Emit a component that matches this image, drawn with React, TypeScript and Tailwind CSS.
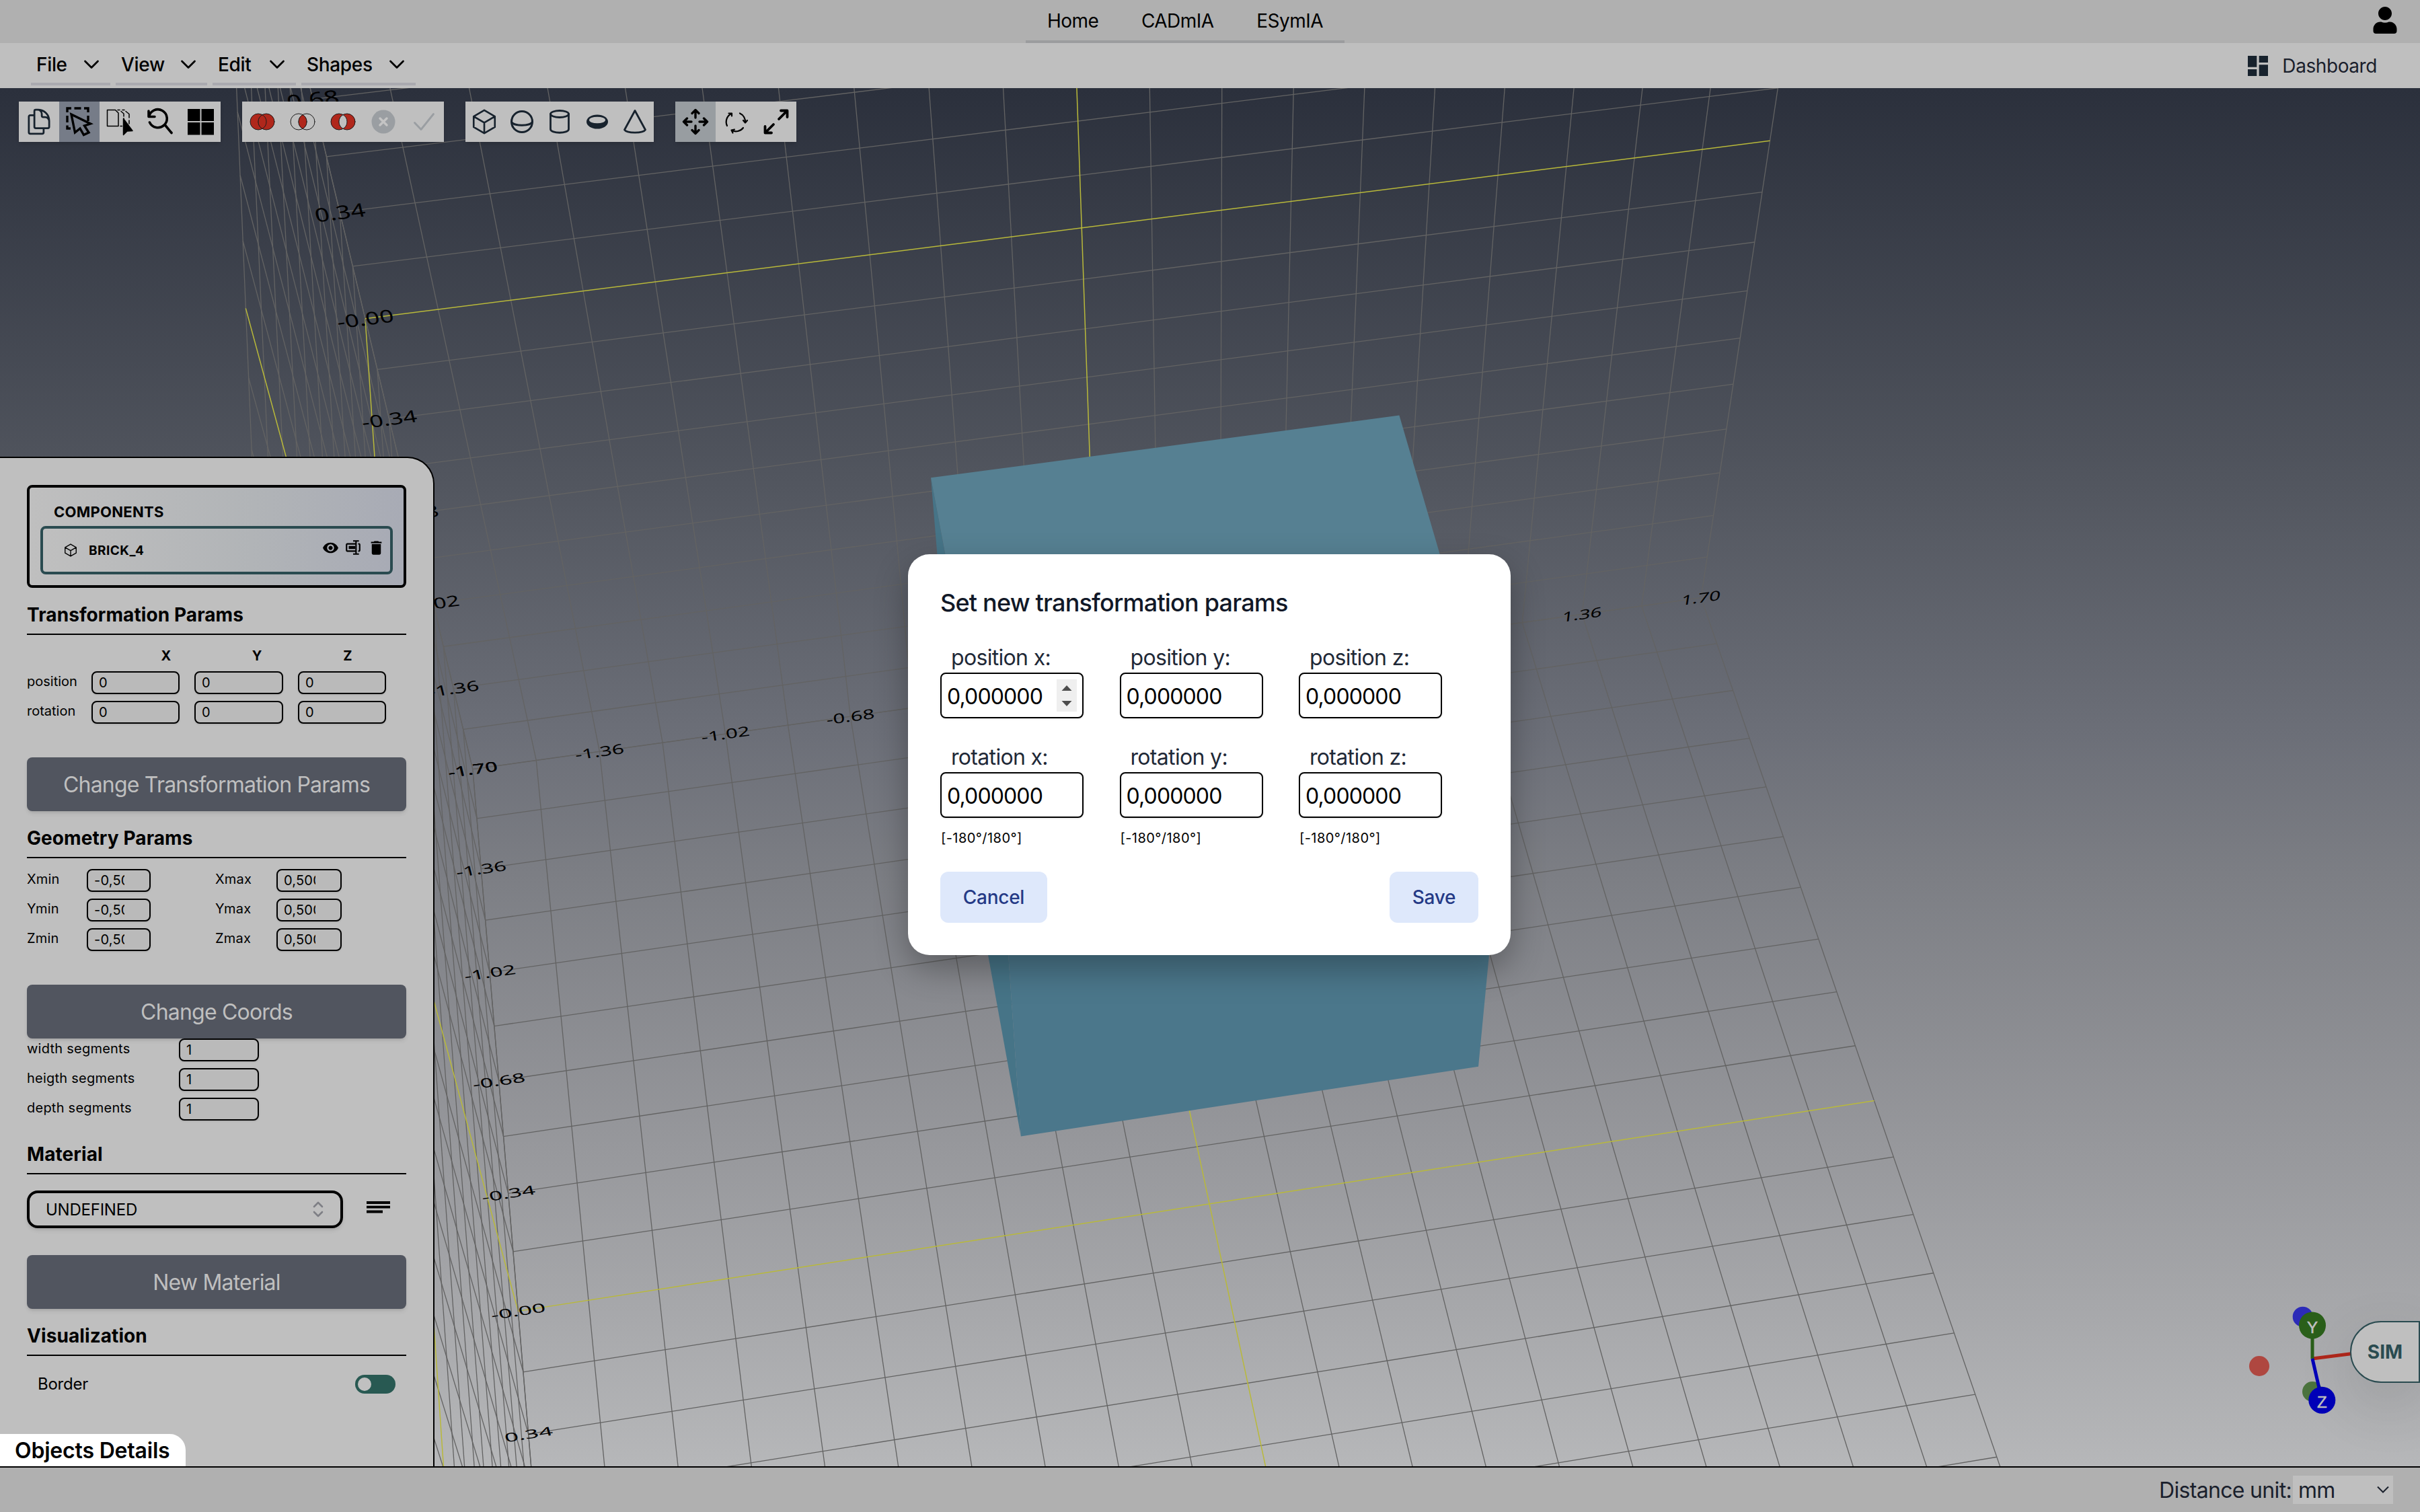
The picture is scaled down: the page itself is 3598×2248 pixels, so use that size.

import type { ReactNode } from "react";
import { BiRename } from "react-icons/bi";
import { FaUser } from "react-icons/fa";
import { HiOutlineCube, HiOutlineDocumentDuplicate } from "react-icons/hi2";
import { MdDashboard, MdDelete, MdVisibility } from "react-icons/md";

/* ---------- 3D scene ---------- */

type Vec3 = [number, number, number];

// Camera projection: rows for screen x, screen y and depth (in thousands of pixels).
const CAM_X = [0.712048, -0.1701367, -0.006381, 1.7980228];
const CAM_Y = [-0.0829077, -0.5424815, 0.4555579, 1.1555672];
const CAM_W = [0.0133203, -0.0945983, -0.0733835, 1];

const dot = (row: number[], [x, y, z]: Vec3) => row[0] * x + row[1] * y + row[2] * z + row[3];

function project(p: Vec3): [number, number] {
  const w = dot(CAM_W, p);
  return [(dot(CAM_X, p) / w) * 1000, (dot(CAM_Y, p) / w) * 1000];
}

const HALF = 1.7;
const STEPS = Array.from({ length: 21 }, (_, i) => -HALF + i * 0.17);
const TICKS = Array.from({ length: 11 }, (_, i) => -HALF + i * 0.34);

function Segment({ a, b, axis }: { a: Vec3; b: Vec3; axis: boolean }) {
  const [x1, y1] = project(a);
  const [x2, y2] = project(b);
  return (
    <line x1={x1} y1={y1} x2={x2} y2={y2} stroke={axis ? "#b9b93a" : "#636363"} strokeWidth={axis ? 1.5 : 1.3} />
  );
}

function GridPlane({ at }: { at: (u: number, v: number) => Vec3 }) {
  const order = [...STEPS.filter((s) => Math.abs(s) > 0.01), 0];
  return (
    <g>
      {order.map((s, i) => (
        <g key={i}>
          <Segment a={at(s, -HALF)} b={at(s, HALF)} axis={s === 0} />
          <Segment a={at(-HALF, s)} b={at(HALF, s)} axis={s === 0} />
        </g>
      ))}
    </g>
  );
}

// A tick is drawn only where the canvas is not covered by the bars, the side panel or the dialog.
function isVisible(x: number, y: number) {
  const inCanvas = x > 0 && x < 3598 && y > 131 && y < 2160;
  const underPanel = x < 595 && y > 690;
  const underDialog = x > 1380 && x < 2210 && y > 840 && y < 1400;
  return inCanvas && !underPanel && !underDialog;
}

function TickLabel({ p, value }: { p: Vec3; value: number }) {
  const [x, y] = project(p);
  if (!isVisible(x, y)) return null;
  const [rx, ry] = project([p[0] + 0.02, p[1], p[2]]);
  const [ux, uy] = project([p[0], p[1] + 0.02, p[2]]);
  const k = 0.0285;
  const m = [(rx - x) * k, (ry - y) * k, -(ux - x) * k, -(uy - y) * k];
  const text = Math.abs(value) < 0.01 ? "-0.00" : value.toFixed(2);
  return (
    <text
      transform={`matrix(${m.map((n) => n.toFixed(4)).join(" ")} ${x.toFixed(1)} ${y.toFixed(1)})`}
      textAnchor="middle"
      y={38}
      fontSize={100}
      fill="#000"
    >
      {text}
    </text>
  );
}

function Face({ pts, fill }: { pts: Vec3[]; fill: string }) {
  return <polygon points={pts.map((p) => project(p).map((n) => n.toFixed(1)).join(",")).join(" ")} fill={fill} />;
}

function Gizmo() {
  return (
    <g>
      <circle cx="3423.7" cy="1957.7" r="15" fill="#2c2bb8" />
      <circle cx="3438" cy="2069" r="15" fill="#4b733e" />
      <circle cx="3359" cy="2031" r="15" fill="#af4740" />
      <line x1="3438" y1="2020" x2="3517" y2="2010" stroke="#b0271b" strokeWidth="5" />
      <line x1="3438" y1="2020" x2="3438" y2="1970" stroke="#2a5f1a" strokeWidth="5" />
      <line x1="3438" y1="2020" x2="3452" y2="2081" stroke="#0000b8" strokeWidth="5" />
      <circle cx="3438" cy="1970.5" r="20" fill="#2a5f1a" />
      <circle cx="3452.3" cy="2081.7" r="20" fill="#0000b8" />
      <g fontFamily="Liberation Sans, sans-serif" fontSize="24" fill="#bfbfbf" stroke="#bfbfbf" strokeWidth="0.6" textAnchor="middle">
        <text x="3438" y="1981.5">Y</text>
        <text x="3452.3" y="2093">Z</text>
      </g>
    </g>
  );
}

function Scene() {
  const h = 0.5;
  return (
    <svg className="absolute inset-0 h-full w-full" viewBox="0 131 3598 2049" fontFamily="Noto Sans, sans-serif">
      <GridPlane at={(u, v) => [-HALF, u, v]} />
      <GridPlane at={(u, v) => [u, v, -HALF]} />
      <GridPlane at={(u, v) => [u, -HALF, v]} />
      <Face fill="#467487" pts={[[-h, h, -h], [-h, h, h], [-h, -h, h], [-h, -h, -h]]} />
      <Face fill="#568092" pts={[[-h, h, -h], [h, h, -h], [h, h, h], [-h, h, h]]} />
      <Face fill="#4b778b" pts={[[-h, h, h], [h, h, h], [h, -h, h], [-h, -h, h]]} />
      {TICKS.map((t) => (
        <g key={t}>
          <TickLabel value={t} p={[-HALF, t, -HALF]} />
          <TickLabel value={t} p={[-HALF, -HALF, t]} />
          <TickLabel value={t} p={[t, -HALF, -HALF]} />
        </g>
      ))}
      <Gizmo />
    </svg>
  );
}

/* ---------- Top bars ---------- */

function Chevron() {
  return (
    <svg className="h-3.5 w-6" viewBox="0 0 24 14" fill="none" stroke="#000" strokeWidth="2.8" strokeLinecap="round" strokeLinejoin="round">
      <path d="M2.5 2 12 11.5 21.5 2" />
    </svg>
  );
}

const MENUS = [
  { label: "File", width: "w-[118px]" },
  { label: "View", width: "w-[136px]" },
  { label: "Edit", width: "w-[124px]" },
  { label: "Shapes", width: "w-[170px]" },
];

function Header() {
  return (
    <header className="flex h-16 items-stretch bg-[#b0b0b0]">
      <div className="w-[1525px]" />
      <nav className="flex w-[474px] items-center justify-between border-b-4 border-[#9b9c9e] px-8 pt-0.5 text-[28px] tracking-[-0.018em] text-black">
        <span>Home</span>
        <span>CADmIA</span>
        <span>ESymIA</span>
      </nav>
      <div className="flex flex-1 items-center justify-end pr-8 pb-1 text-black">
        <FaUser size={40} />
      </div>
    </header>
  );
}

function MenuBar() {
  return (
    <div className="flex h-[67px] items-end justify-between bg-[#bfbfbf] pl-[46px] pr-16">
      <div className="flex gap-2 pb-1">
        {MENUS.map((m) => (
          <div key={m.label} className={`${m.width} flex h-[59px] items-center justify-between border-b-4 border-[#aaaab0] pl-2 pr-4 text-[28px] font-medium tracking-[-0.012em] text-black`}>
            <span>{m.label}</span>
            <Chevron />
          </div>
        ))}
      </div>
      <div className="flex h-[67px] items-center gap-4 text-[28px] tracking-[-0.015em] text-[#1a202c]">
        <MdDashboard size={40} color="#17222d" />
        <span>Dashboard</span>
      </div>
    </div>
  );
}

/* ---------- Toolbars ---------- */

function Tool({ children, active, wide = true }: { children: ReactNode; active?: string; wide?: boolean }) {
  return <div className={`flex h-[60px] items-center justify-center ${wide ? "w-[60px]" : "w-14"} ${active ?? ""}`}>{children}</div>;
}

function Icon({ children }: { children: ReactNode }) {
  return (
    <svg className="h-[60px] w-[60px] shrink-0" viewBox="0 0 60 60" fill="none" stroke="#000" strokeLinecap="round" strokeLinejoin="round">
      {children}
    </svg>
  );
}

const LENS = "M30 19.6A12 12 0 0 1 30 40.4A12 12 0 0 1 30 19.6Z";

function Venn({ sides, lens }: { sides: string; lens: string }) {
  return (
    <Icon>
      <g stroke="#1c1c1c" strokeWidth="1">
        <circle cx="24" cy="30" r="12" fill={sides} />
        <circle cx="36" cy="30" r="12" fill={sides} />
        <path d={LENS} fill={lens} />
      </g>
    </Icon>
  );
}

function Toolbars() {
  const group = "flex bg-[#bfbfbf] shadow-md";
  return (
    <div className="relative flex gap-8 pl-7 pt-5">
      <div className={group}>
        <Tool><HiOutlineDocumentDuplicate size={44} color="#17222d" /></Tool>
        <Tool active="bg-[#767c88]">
          <Icon>
            <g strokeWidth="3.4" strokeLinecap="butt" strokeLinejoin="miter">
              <path d="M12 16V10H18M22.500 10H32.500M37 10H43V16M43 21V29M12 21V31M12 35.500V40H17" />
              <path d="M18 19 46.500 33 37.500 36 44 46 36.500 49.500 31 40 23.500 46Z" />
            </g>
          </Icon>
        </Tool>
        <Tool>
          <Icon>
            <path d="M11.500 12.500V36.500H28V17L23.500 12.500Z" strokeWidth="1.500" />
            <path d="M27 12.500H30M32 14.500 36 18V22M34 12.500H37M39 14.500 44 18.500V24M44 28V33M36 25V27M31 36.500H33.500" strokeWidth="1.500" />
            <path d="M35.500 25.500 49 43.500 41 44 35.500 49.500Z" fill="#000" strokeWidth="1.500" />
          </Icon>
        </Tool>
        <Tool>
          <Icon><path d="M13 14V22.500H22M13.500 22.500A13.500 13.500 0 1 1 14.500 31M37.500 35 47 46.500" strokeWidth="3.600" /></Icon>
        </Tool>
        <Tool>
          <Icon><path d="M11 11H29.500V29H11ZM31.500 11H50V29H31.500ZM11 31H29.500V49.500H11ZM31.500 31H50V49.500H31.500Z" fill="#000" stroke="none" /></Icon>
        </Tool>
      </div>
      <div className={group}>
        <Tool><Venn sides="#b0271b" lens="#b0271b" /></Tool>
        <Tool><Venn sides="none" lens="#b0271b" /></Tool>
        <Tool><Venn sides="#b0271b" lens="#bfbfbf" /></Tool>
        <Tool>
          <Icon>
            <circle cx="30" cy="30" r="17.500" fill="#9a9ea2" stroke="none" />
            <path d="M25 25 35 35M35 25 25 35" stroke="#c4c4c4" strokeWidth="3.400" />
          </Icon>
        </Tool>
        <Tool><Icon><path d="M16.500 31.500 26 41.500 44.500 18.500" stroke="#9a9ea2" strokeWidth="2.800" /></Icon></Tool>
      </div>
      <div className={group}>
        <Tool wide={false}><HiOutlineCube size={42} color="#17222d" /></Tool>
        <Tool wide={false}>
          <Icon>
            <g stroke="#17222d" strokeWidth="3">
              <circle cx="30" cy="30" r="15.500" />
              <path d="M14.500 30C17 37 43 37 45.500 30" />
            </g>
          </Icon>
        </Tool>
        <Tool wide={false}>
          <Icon>
            <g stroke="#17222d" strokeWidth="2.800">
              <ellipse cx="30" cy="18.500" rx="13.500" ry="5" />
              <path d="M16.500 18.500V41C16.500 48 43.500 48 43.500 41V18.500" />
            </g>
          </Icon>
        </Tool>
        <Tool wide={false}>
          <Icon>
            <ellipse cx="30" cy="30" rx="16" ry="10.500" fill="#17222d" stroke="none" />
            <ellipse cx="30" cy="27.500" rx="12" ry="4.800" fill="#bfbfbf" stroke="none" />
          </Icon>
        </Tool>
        <Tool wide={false}>
          <Icon><path d="M30 13.500 14.500 42C18 47.500 42 47.500 45.500 42Z" stroke="#17222d" strokeWidth="2.800" /></Icon>
        </Tool>
      </div>
      <div className={group}>
        <Tool active="bg-[#989da1]">
          <Icon>
            <path d="M30 24V13M25 17.500 30 12.500 35 17.500M30 36V47M25 42.500 30 47.500 35 42.500M24 30H13M17.500 25 12.500 30 17.500 35M36 30H47M42.500 25 47.500 30 42.500 35" strokeWidth="3.400" />
          </Icon>
        </Tool>
        <Tool>
          <Icon>
            <g strokeWidth="2.200">
              <path d="M23.500 18A13.500 13.500 0 0 0 17 36M36 17.500A13.500 13.500 0 0 1 44 31M41 39A14 14 0 0 1 24 43" />
              <path d="M24 21.500V17.500H19.500M41 28 44 31.500 47 28M25.500 46.500 23.500 42.500 28 41.500" />
            </g>
          </Icon>
        </Tool>
        <Tool>
          <Icon><path d="M34 26 46 14M37 13.500H46.500V23M26 34 14 46M13.500 37V46.500H23" strokeWidth="3.800" /></Icon>
        </Tool>
      </div>
    </div>
  );
}

/* ---------- Objects details panel ---------- */

function Field({ value, width, clip }: { value: string; width: string; clip?: string }) {
  return (
    <div className={`${width} flex h-[34px] items-center rounded-lg border-2 border-black bg-[#bababa] pl-[9px] text-[20px] text-black shadow-sm`}>
      <span className={`overflow-hidden whitespace-nowrap ${clip ?? ""}`}>{value}</span>
    </div>
  );
}

function Heading({ children }: { children: ReactNode }) {
  return <h2 className="flex h-[70px] items-center border-b-2 border-black pt-3 text-[28px] font-bold tracking-[0.003em] text-black">{children}</h2>;
}

function PanelButton({ children }: { children: ReactNode }) {
  return (
    <button className="flex h-20 w-full shrink-0 items-center justify-center rounded-lg bg-[#51555f] pt-0.5 text-[32px] tracking-[-0.025em] text-[#bfbfbf] shadow-md">{children}</button>
  );
}

function DetailsPanel() {
  return (
    <aside className="absolute bottom-0 left-0 flex h-[1501px] w-[646px] flex-col rounded-tr-[40px] border-r-2 border-t-2 border-black bg-[#bfbfbf] pl-10 pr-10 pt-10">
      <div className="flex h-[153px] w-[564px] shrink-0 flex-col rounded-lg border-4 border-black bg-[linear-gradient(to_right,#bfbfbf,#b1b4b7_60%,#a8abb5)] px-4">
        <div className="flex h-[57px] items-center pl-5 pt-4 text-[22px] font-bold tracking-[0.012em] text-black">COMPONENTS</div>
        <div className="flex h-[72px] items-center rounded-lg border-4 border-[#2a4b50] bg-[linear-gradient(to_right,#bfbfbf,#b1b4b7_60%,#a8abb5)] pl-[30px] pr-1 text-black">
          <HiOutlineCube size={22} />
          <span className="ml-4 flex-1 pt-0.5 text-[19px] font-bold tracking-[0.025em]">BRICK_4</span>
          <div className="flex items-center pb-2">
            <span className="flex w-[34px] justify-center"><MdVisibility size={25} /></span>
            <span className="flex w-[34px] justify-center"><BiRename size={26} /></span>
            <span className="flex w-[34px] justify-center"><MdDelete size={27} /></span>
          </div>
        </div>
      </div>

      <div className="w-[564px]">
        <Heading>Transformation Params</Heading>
        <div className="flex h-[54px] items-center gap-[95px] pl-[187px] pt-2 text-[20px] font-bold text-black">
          <span className="w-10 text-center">X</span>
          <span className="w-10 text-center">Y</span>
          <span className="w-10 text-center">Z</span>
        </div>
        <div className="flex flex-col gap-2.5">
          {["position", "rotation"].map((name) => (
            <div key={name} className="flex items-center">
              <span className="w-24 pb-1 text-[20px] text-black">{name}</span>
              <div className="flex gap-[22px]">
                <Field value="0" width="w-[131px]" />
                <Field value="0" width="w-[132px]" />
                <Field value="0" width="w-[131px]" />
              </div>
            </div>
          ))}
        </div>
        <div className="mt-[50px]"><PanelButton>Change Transformation Params</PanelButton></div>

        <Heading>Geometry Params</Heading>
        <div className="mt-4 flex flex-col gap-2.5 text-[20px] tracking-[0.01em] text-black">
          {["X", "Y", "Z"].map((axis) => (
            <div key={axis} className="flex items-center">
              <span className="w-[89px] pb-1">{axis}min</span>
              <Field value="-0,500000" width="w-[95px]" clip="w-[45px]" />
              <span className="ml-24 w-[91px] pb-1">{axis}max</span>
              <Field value="0,500000" width="w-[97px]" clip="w-[47px]" />
            </div>
          ))}
        </div>
        <div className="mt-[50px]"><PanelButton>Change Coords</PanelButton></div>
        <div className="flex flex-col gap-2.5 text-[20px] tracking-[0.012em] text-black">
          {["width segments", "heigth segments", "depth segments"].map((name) => (
            <div key={name} className="flex items-center">
              <span className="w-[226px] pb-1">{name}</span>
              <Field value="1" width="w-[119px]" />
            </div>
          ))}
        </div>

        <div className="mt-2.5"><Heading>Material</Heading></div>
        <div className="mt-6 flex items-center">
          <div className="flex h-14 w-[470px] items-center justify-between rounded-2xl border-4 border-black pl-6 pr-[25px] text-[24px] tracking-[-0.01em] text-black shadow-md">
            <span className="pt-0.5">UNDEFINED</span>
            <svg className="h-6 w-4" viewBox="0 0 16 24" fill="none" stroke="#7e7f85" strokeWidth="2.600" strokeLinecap="round" strokeLinejoin="round">
              <path d="M2 8 8 2 14 8M2 16 8 22 14 16" />
            </svg>
          </div>
          <svg className="-mt-1.5 ml-[35px] h-5 w-[35px]" viewBox="0 0 35 20" stroke="#000" strokeWidth="3.800">
            <path d="M0 3H35M0 9.700H35M0 16.500H24" />
          </svg>
        </div>
        <div className="mt-10"><PanelButton>New Material</PanelButton></div>

        <Heading>Visualization</Heading>
        <div className="mt-7 flex h-7 items-center justify-between pl-4 pr-4 text-[24px] tracking-[-0.01em] text-black">
          <span>Border</span>
          <div className="flex h-7 w-[60px] items-center rounded-full bg-[#285952] pl-1">
            <div className="h-5 w-5 rounded-full bg-[#c0c0c0]" />
          </div>
        </div>
      </div>

      <div className="absolute bottom-0 left-0 flex h-12 w-[276px] items-center rounded-tr-[24px] bg-white pl-[22px] pt-0.5 text-[32px] font-semibold tracking-[-0.006em] text-black">
        Objects Details
      </div>
    </aside>
  );
}

/* ---------- Footer ---------- */

function Footer() {
  return (
    <footer className="flex h-[68px] items-center justify-end border-t-2 border-black bg-[#b0b0b0] pr-10 text-[32px] tracking-[-0.021em] text-[#1a202c]">
      <span className="pt-0.5">Distance unit:</span>
      <div className="ml-0.5 flex h-[42px] w-[149px] items-center justify-between bg-[#bfbfbf] pl-2 pr-1.5">
        <span className="pt-0.5">mm</span>
        <svg className="h-3 w-[18px]" viewBox="0 0 18 12" fill="none" stroke="#1a202c" strokeWidth="2">
          <path d="M1 1.500 9 9.500 17 1.500" />
        </svg>
      </div>
    </footer>
  );
}

/* ---------- Dialog ---------- */

function NumberField({ label, hint, spinner }: { label: string; hint?: string; spinner?: boolean }) {
  return (
    <label className="flex w-[213px] flex-col">
      <span className="flex h-12 items-center pl-4 pt-[3px] text-[32px] tracking-[-0.021em] text-[#1f2937]">{label}:</span>
      <span className="flex h-[68px] items-center justify-between rounded-lg border-2 border-black bg-white pl-2 pr-2 text-[32px] tracking-[-0.027em] text-black shadow-sm">
        <span className="pt-[3px]">0,000000</span>
        {spinner && (
          <svg className="h-12 w-[30px] bg-[#efefef]" viewBox="0 0 30 48" fill="#4d4d4d">
            <path d="M7.500 17 15 9 22.500 17ZM7.500 32 15 40 22.500 32Z" />
          </svg>
        )}
      </span>
      {hint && <span className="mt-4 h-[26px] pl-px text-[20px] leading-7 tracking-[0.022em] text-black">{hint}</span>}
    </label>
  );
}

function TransformDialog() {
  const button = "flex h-[76px] items-center justify-center rounded-xl bg-[#dee8fb] text-[28px] font-medium tracking-[-0.01em] text-[#253a86]";
  return (
    <div className="absolute inset-0 flex items-center justify-center pb-1 pr-0.5">
      <div className="h-[596px] w-[896px] rounded-[32px] bg-white p-12 shadow-[0_20px_50px_rgba(0,0,0,0.3)]">
        <h3 className="flex h-12 items-center text-[36px] font-medium tracking-[-0.022em] text-[#111827]">Set new transformation params</h3>
        <div className="mt-8 flex gap-[53.5px]">
          <NumberField label="position x" spinner />
          <NumberField label="position y" />
          <NumberField label="position z" />
        </div>
        <div className="mt-8 flex gap-[53.5px]">
          <NumberField label="rotation x" hint="[-180°/180°]" />
          <NumberField label="rotation y" hint="[-180°/180°]" />
          <NumberField label="rotation z" hint="[-180°/180°]" />
        </div>
        <div className="mt-[38px] flex justify-between">
          <button className={`${button} w-[159px]`}>Cancel</button>
          <button className={`${button} w-[132px]`}>Save</button>
        </div>
      </div>
    </div>
  );
}

export default function App() {
  return (
    <div className="relative flex h-[2248px] w-[3598px] flex-col overflow-hidden font-['Inter',sans-serif]">
      <Header />
      <MenuBar />
      <main className="relative flex-1 overflow-hidden bg-[linear-gradient(to_bottom,#2b303c_0%,#51555e_28%,#6c6f78_47%,#7c7e84_57%,#97989c_77%,#b6b7b9_100%)]">
        <Scene />
        <Toolbars />
        <DetailsPanel />
        <div className="absolute bottom-[124px] right-0 flex h-[92px] w-[104px] items-center justify-center rounded-l-full border-2 border-[#2a4b50] bg-[#bfbfbf] text-[28px] font-bold text-[#2a4b50] shadow-[0_30px_90px_rgba(0,0,0,0.12)]">
          SIM
        </div>
      </main>
      <Footer />
      <TransformDialog />
    </div>
  );
}
